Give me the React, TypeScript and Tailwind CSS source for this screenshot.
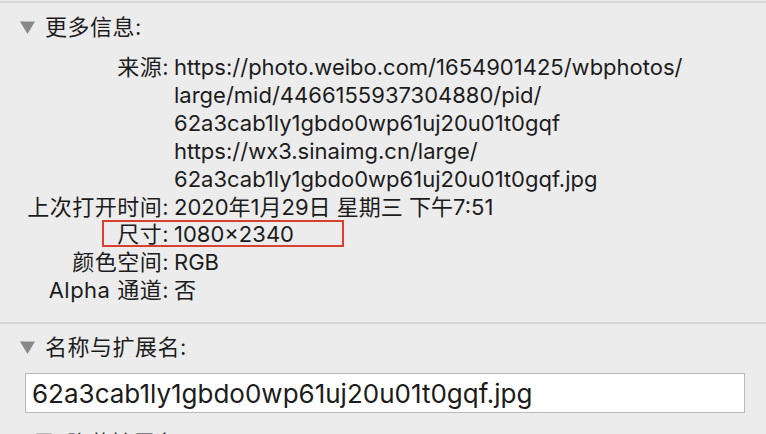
import React from 'react';

const rows: { label: string; value: string[] }[] = [
  {
    label: '来源:',
    value: [
      'https://photo.weibo.com/1654901425/wbphotos/',
      'large/mid/4466155937304880/pid/',
      '62a3cab1ly1gbdo0wp61uj20u01t0gqf',
      'https://wx3.sinaimg.cn/large/',
      '62a3cab1ly1gbdo0wp61uj20u01t0gqf.jpg',
    ],
  },
  { label: '上次打开时间:', value: ['2020年1月29日 星期三 下午7:51'] },
  { label: '尺寸:', value: ['1080×2340'] },
  { label: '颜色空间:', value: ['RGB'] },
  { label: 'Alpha 通道:', value: ['否'] },
];

const Triangle = () => (
  <svg width="15" height="13" viewBox="0 0 15 13" className="shrink-0">
    <polygon points="0,0.5 15,0.5 7.5,13" fill="#888888" />
  </svg>
);

const App: React.FC = () => {
  return (
    <div
      className="w-[766px] h-[434px] overflow-hidden bg-[#ececec] text-[#1c1c1c] relative"
      style={{ fontFamily: 'Inter, "Noto Sans CJK SC", sans-serif' }}
    >
      <div className="h-[2px] mt-[1px] bg-[#d6d6d6]" />

      {/* 更多信息 */}
      <div className="flex items-center gap-[10px] pl-[20px] pt-[8px] h-[40px] text-[22px] tracking-[0.5px]">
        <Triangle />
        <span>更多信息:</span>
      </div>

      <div className="relative mt-[11px] text-[22px] leading-[27.9px]">
        {rows.map((r) => (
          <div key={r.label} className="flex">
            <div className="w-[169px] text-right shrink-0 whitespace-nowrap tracking-[0.5px]">{r.label}</div>
            <div className="pl-[5px]">
              {r.value.map((v) => (
                <div key={v} className="whitespace-nowrap">{v}</div>
              ))}
            </div>
          </div>
        ))}
        <div className="absolute left-[102px] top-[166px] w-[242px] h-[27px] border-2 border-[#d8412f]" />
      </div>

      <div className="mt-[17px] h-[2px] bg-[#d6d6d6]" />

      {/* 名称与扩展名 */}
      <div className="flex items-center gap-[10px] pl-[20px] pt-[8px] h-[38px] text-[22px] tracking-[0.5px]">
        <Triangle />
        <span>名称与扩展名:</span>
      </div>

      <div className="ml-[25px] mt-[11px] w-[720px] h-[40px] bg-white border border-[#b9b9b9] flex items-center px-[6px] text-[26px]">
        62a3cab1ly1gbdo0wp61uj20u01t0gqf.jpg
      </div>

      <div className="flex items-center gap-[12px] ml-[33px] mt-[14px] text-[22px]">
        <div className="w-[22px] h-[22px] rounded-[5px] bg-white border border-[#b5b5b5] shrink-0" />
        <span>隐藏扩展名</span>
      </div>
    </div>
  );
};

export default App;
